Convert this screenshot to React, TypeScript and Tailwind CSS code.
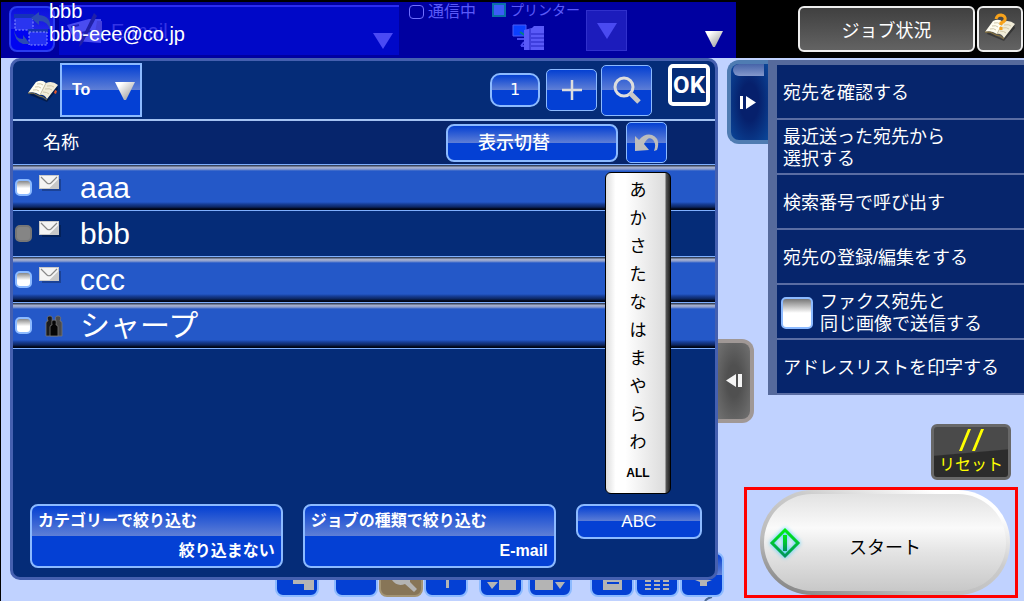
import React, { useState } from 'react';

interface Address {
  id: string;
  name: string;
  type: 'mail' | 'group';
}

const addresses: Address[] = [
  { id: 'a', name: 'aaa', type: 'mail' },
  { id: 'b', name: 'bbb', type: 'mail' },
  { id: 'c', name: 'ccc', type: 'mail' },
  { id: 'sharp', name: 'シャープ', type: 'group' },
];

const kanaIndex = ['あ', 'か', 'さ', 'た', 'な', 'は', 'ま', 'や', 'ら', 'わ'];

const gloss = 'bg-[linear-gradient(to_bottom,#0440d2_0%,#5f7fd6_50%,#0440d4_50%,#0440d4_100%)] border-[#8cbaff] text-white';
const menuItem = 'flex h-[55px] w-full items-center border-b-2 border-[#5a6da3] px-1.5 pt-[3px] text-left text-lg leading-[22px] text-white';

function DownArrow({ className = '' }: { className?: string }) {
  return (
    <svg className={className} width="20" height="20" viewBox="0 0 20 20">
      <defs>
        <linearGradient id="arrowFill" x1="0" y1="0" x2="1" y2="1">
          <stop offset="0.2" stopColor="#fff" />
          <stop offset="0.8" stopColor="#aaa" />
        </linearGradient>
      </defs>
      <path d="M0 1H20L11 19H9Z" fill="url(#arrowFill)" />
    </svg>
  );
}

function BookIcon({ question = false }: { question?: boolean }) {
  return (
    <svg width="32" height="32" viewBox="0 0 32 32" className="shrink-0">
      <path d="M4 19L19 26L30 12L31 15L20 28L3 21Z" fill="#000" opacity="0.35" />
      <path d="M1 19L9 8Q15 5 19 9L13 21Q7 17 1 19Z" fill="#fffdf0" />
      <path d="M19 9Q25 6 31 11L20 25Q17 20 13 21Z" fill="#f1ecd8" />
      <path d="M1 19Q7 18 12 22Q16 22 20 26" fill="none" stroke="#8d7436" />
      <path d="M19 9L13 21M10 10q4-1 6 1M8 13q4-1 6 1M6 16q4-1 6 1M20 12q5-1 7 1M18 15q5-1 7 1M16 18q4 0 6 2" fill="none" stroke="#cfc7aa" />
      {question
        ? <path d="M12 6Q13 2 17 2Q22 3 21 7Q20 9 17 10V12M17 14V17" fill="none" stroke="#f7a21b" strokeWidth="3" />
        : <path d="M28 16l2 1-1 3-2-1Z" fill="#e2542c" />}
    </svg>
  );
}

function MailIcon() {
  return (
    <svg width="24" height="20" viewBox="0 0 24 20">
      <rect x="3" y="4" width="19" height="12" fill="#000" opacity="0.25" />
      <rect x="0.5" y="0.5" width="19" height="13" fill="#f4f4f4" stroke="#c9c9c9" />
      <path d="M10 13.5L19.5 4V13.5Z" fill="#c8c8c8" />
      <path d="M2 2L8 8Q10 9.500 12 8L18 2" fill="none" stroke="#888" strokeWidth="1.2" />
    </svg>
  );
}

function GroupIcon() {
  return (
    <svg width="18" height="22" viewBox="0 0 18 22">
      <g stroke="#777" strokeWidth="0.8">
        <path d="M1 21V8Q1 6 3 6Q1 1 5 1Q8 1 7 6L9 9V21Z" fill="#1b1b1b" />
        <path d="M9 21V9L11 6Q9 1 13 1Q17 1 15 6Q17 6 17 8V21Z" fill="#4a4a4a" />
        <path d="M5 21V12Q5 10 7 10Q6 5 9 5Q12 5 11 10Q13 10 13 12V21Z" fill="#050505" />
      </g>
    </svg>
  );
}

function Header() {
  return (
    <header className="flex h-[58px] bg-black pt-0.5">
      <div className="relative flex min-w-0 flex-1 bg-[#0000a0] pl-2">
        <button aria-label="切替" className="mt-1 flex h-[46px] w-[46px] shrink-0 items-center justify-center rounded-lg border-2 border-[#2a3cf0] bg-[linear-gradient(to_bottom,#0a10dc_0%,#2024e8_50%,#0004f0_50%)]">
          <svg width="40" height="38" viewBox="0 0 40 38">
            <path d="M3 5H21V20H3Z" fill="#2a35f0" stroke="#8f95ff" strokeDasharray="2 1.500" />
            <path d="M2 4H22V8H2ZM16 19H36V23H16Z" fill="#1532b8" />
            <path d="M17 22H35V35H17Z" fill="#2330f5" stroke="#8f95ff" strokeDasharray="2 1.500" />
            <path d="M38 20Q36 11 27 11V15L19 8L27 2V5Q40 6 38 20Z" fill="#2b4bb4" />
            <path d="M2 19Q3 29 11 29V25L18 34H11Q2 31 2 19Z" fill="#2b4bb4" />
          </svg>
        </button>
        <div className="mt-[3px] ml-1 flex h-[50px] min-w-0 flex-1 items-center border-t-2 border-[#2a2cf0] bg-[#0008c8] pr-1.5 pl-2">
          <svg width="40" height="36" viewBox="0 0 40 36">
            <path d="M0 12L22 6H34V30L8 28Z" fill="#4a4cf0" />
            <path d="M4 14l8-2M14 20l10-2M13 24l8-2" stroke="#2223c0" strokeWidth="2" />
            <path d="M27 0L30 3L15 31L12 34L13 29Z" fill="#2020a8" />
            <path d="M30 8h5v12h-7Z" fill="#4340dc" />
          </svg>
          <span className="ml-1 text-xl text-[#3434e4]">E-mail</span>
          <svg className="mt-5 ml-auto" width="20" height="16" viewBox="0 0 20 16"><path d="M0 0H20L10 16Z" fill="#4a4af4" /></svg>
        </div>
        <div className="absolute top-0 left-12 text-xl leading-[23px] text-white">
          <p className="-mt-0.5">bbb</p>
          <p>bbb-eee@co.jp</p>
        </div>
        <div className="ml-2.5 flex shrink-0 gap-4 text-[#5a5af8]">
          <p className="flex h-5 items-center gap-1 text-base">
            <span className="h-3.5 w-[15px] rounded-sm border border-[#7070ff]" />通信中
          </p>
          <div className="flex flex-col gap-1.5">
            <p className="flex h-4 items-center gap-1 text-sm">
              <span className="h-3.5 w-3.5 border-2 border-[#0a6fa8] bg-[#3d5cf8]" />プリンター
            </p>
            <svg className="ml-5" width="33" height="28" viewBox="0 0 33 28">
              <path d="M1 1H14V12H1Z" fill="#0a40ff" stroke="#4a5cf8" />
              <path d="M5 15H12M9 22H14M12 18L9 22" stroke="#4a4af0" strokeWidth="2" />
              <path d="M8 8L14 12" stroke="#087f80" strokeWidth="2" />
              <path d="M12 6L20 4L22 2H32V26H12Z" fill="#5a5af8" />
              <path d="M19 10H32M19 14H32M19 18H32M19 22H32M18 5V26" stroke="#2525c4" />
            </svg>
          </div>
        </div>
        <button aria-label="プリンター選択" className="mt-2 ml-1.5 flex h-[41px] w-[41px] shrink-0 items-center justify-center border border-[#3030cc] bg-[#1c1cbc]">
          <svg width="20" height="16" viewBox="0 0 20 16"><path d="M0 0H20L10 16Z" fill="#4a4af0" /></svg>
        </button>
        <button aria-label="詳細" className="mt-[27px] mr-3 ml-[77px] h-5 shrink-0"><DownArrow className="h-[18px]" /></button>
      </div>
      <div className="flex w-72 shrink-0 justify-end gap-0.5 pt-1 pr-px">
        <button className="h-[46px] w-[177px] rounded-md border-2 border-[#eee] bg-gradient-to-b from-[#404040] to-[#636363] pt-1 text-lg text-white">ジョブ状況</button>
        <button aria-label="ヘルプ" className="flex h-[46px] w-[46px] items-center justify-center rounded-md border-2 border-[#eee] bg-gradient-to-b from-[#404040] to-[#636363]"><BookIcon question /></button>
      </div>
    </header>
  );
}

function DialogTools() {
  return (
    <div className="flex h-[60px] items-center border-b-2 border-[#a3c2f2] pr-[5px] pl-3.5">
      <BookIcon />
      <div className="relative ml-px">
        <select aria-label="宛先種別" className={`h-[54px] w-[82px] appearance-none border-2 pl-2.5 text-base font-bold outline-none ${gloss}`}>
          <option>To</option>
        </select>
        <DownArrow className="pointer-events-none absolute top-[18px] right-[7px]" />
      </div>
      <button className={`ml-auto h-[34px] w-[50px] rounded-[10px] border-2 font-['DejaVu_Sans'] text-base ${gloss}`}>1</button>
      <button aria-label="追加" className={`ml-1.5 flex h-[42px] w-[51px] items-center justify-center rounded-[5px] border ${gloss}`}>
        <svg width="20" height="20" viewBox="0 0 20 20"><path d="M10 0V20M0 10H20" stroke="#ddd" strokeWidth="2.500" /></svg>
      </button>
      <button aria-label="検索" className={`ml-1 flex h-[51px] w-[51px] items-center justify-center rounded-[5px] border ${gloss}`}>
        <svg width="28" height="28" viewBox="0 0 28 28">
          <circle cx="11" cy="11" r="9" fill="none" stroke="#ddd" strokeWidth="3" />
          <path d="M17 17L26 26" stroke="#c8c8c8" strokeWidth="5" />
        </svg>
      </button>
      <button className="mt-[3px] ml-4 flex h-[42px] w-[42px] items-center justify-center self-start rounded-[5px] border-4 border-white font-['Liberation_Sans_Narrow','Roboto',sans-serif] text-2xl leading-none font-bold text-white">OK</button>
    </div>
  );
}

function AddressList() {
  const [selected, setSelected] = useState<string[]>(['b']);

  const toggle = (id: string) => {
    setSelected(selected.includes(id) ? selected.filter(i => i !== id) : [...selected, id]);
  };

  return (
    <ul>
      {addresses.map(item => (
        <li
          key={item.id}
          className={`h-[46px] border-b border-[#7fb0ff] ${selected.includes(item.id)
            ? 'bg-[#052c78]'
            : 'bg-[linear-gradient(to_bottom,#39445c_0,#39445c_1px,#a9b3cd_2px,#8fa0cf_4px,#2458c8_6px,#2458c8_37px,#173f99_39px,#0c2560_42px,#000514_44px)]'}`}
        >
          <label className="flex h-full items-center pl-0.5">
            <input
              type="checkbox"
              checked={selected.includes(item.id)}
              onChange={() => toggle(item.id)}
              className="h-[17px] w-[17px] shrink-0 appearance-none rounded-[5px] border-2 border-[#8cbaff] bg-[linear-gradient(to_bottom,#888_0%,#fff_55%)] checked:border-[#777] checked:bg-[#858585] checked:bg-none"
            />
            <span className="flex w-12 justify-center pr-3.5">
              {item.type === 'mail' ? <span className="mb-1.5 ml-1"><MailIcon /></span> : <span className="ml-2.5"><GroupIcon /></span>}
            </span>
            <span className="text-3xl leading-[44px] text-white">{item.name}</span>
          </label>
        </li>
      ))}
    </ul>
  );
}

function KanaIndex() {
  return (
    <nav className="absolute top-[111px] right-11 flex w-[66px] flex-col items-center rounded-md border border-black bg-[linear-gradient(to_right,#ddd_0%,#fff_15%,#fff_30%,#dcdcdc_92%,#555_94%,#222_100%)] pt-1 pb-1.5 text-black">
      {kanaIndex.map(k => <button key={k} className="h-7 w-full text-[17px] leading-7">{k}</button>)}
      <button className="h-[30px] w-full pt-0.5 text-xs font-bold">ALL</button>
    </nav>
  );
}

function AddressBook() {
  return (
    <section className="relative z-10 flex flex-1 flex-col rounded-[10px] border-[3px] border-[#4560b0] bg-[#052c78]">
      <DialogTools />
      <div className="flex h-11 items-center border-b border-[#7fb0ff] bg-[#06256c] pr-12 pl-[30px]">
        <h2 className="text-lg text-white">名称</h2>
        <button className={`ml-auto h-[38px] w-[172px] rounded-lg border-2 pl-[30px] text-left text-lg font-medium ${gloss}`}>表示切替</button>
        <button aria-label="戻る" className={`ml-2 flex h-[41px] w-[41px] items-center justify-center rounded-[5px] border ${gloss}`}>
          <svg width="24" height="20" viewBox="0 0 24 20">
            <path d="M0 3L4 7Q10 0 17 2Q26 6 22 17L19 18Q22 10 17 6Q13 3 9 11L14 17L0 18Z" fill="#bdbdbd" />
          </svg>
        </button>
      </div>
      <AddressList />
      <KanaIndex />
      <div className="mt-auto grid grid-cols-[2fr_2fr_1fr] items-start gap-5 pr-[13px] pb-[9px] pl-[17px] text-base font-bold">
        <button className={`flex h-16 flex-col justify-between rounded-lg border-2 px-1.5 py-[3px] ${gloss}`}>
          <span className="self-start">カテゴリーで絞り込む</span>
          <span className="self-end">絞り込まない</span>
        </button>
        <button className={`flex h-16 flex-col justify-between rounded-lg border-2 px-1.5 py-[3px] ${gloss}`}>
          <span className="self-start">ジョブの種類で絞り込む</span>
          <span className="self-end">E-mail</span>
        </button>
        <button className={`h-[35px] rounded-lg border-2 text-[17px] leading-6 font-normal ${gloss}`}>ABC</button>
      </div>
    </section>
  );
}

const toolButtons = [
  { label: '送信', className: 'mr-3.5', icon: 'M16 0H37V10H27V4H16Z' },
  { label: '表示', className: '', icon: '' },
  { label: '拡大', className: '', icon: 'M11 0Q16 7 24 4L33 12L36 9L29 2V0Z', brown: true },
  { label: '追加', className: 'mr-2.5', icon: 'M20 0H23V8H20Z' },
  { label: '前へ', className: 'mr-1', icon: 'M6 2H17L11 9ZM18 0H35V10H18Z' },
  { label: '次へ', className: 'mr-[17px]', icon: 'M5 0H23V10H5ZM25 2H35L30 9Z' },
  { label: '文書', className: '', icon: 'M11 0H30V2H15V4H27V2H30V10H11Z' },
  { label: '一覧', className: '', icon: 'M8 0H14V2H8ZM8 4H14V6H8ZM8 8H14V10H8ZM17 0H23V2H17ZM17 4H23V6H17ZM17 8H23V10H17ZM26 0H32V2H26ZM26 4H32V6H26ZM26 8H32V10H26Z' },
  { label: '移動', className: '', icon: 'M13 0H30L25 2V6H18V2Z' },
];

function BottomTools() {
  return (
    <div className="-mt-7 -mr-1.5 flex justify-end gap-px">
      {toolButtons.map(b => (
        <button
          key={b.label}
          aria-label={b.label}
          className={`flex h-[45px] w-11 items-end justify-center rounded-lg border-2 pb-px ${b.className} ${b.brown ? 'border-[#a39474] bg-[#877557]' : gloss}`}
        >
          <svg width="40" height="14" viewBox="0 0 40 14" className="shrink-0"><path d={b.icon} fill="#b4b4b4" /></svg>
        </button>
      ))}
    </div>
  );
}

function SideMenu() {
  return (
    <div className="min-w-0 flex-1 self-start border-t-[5px] border-l-[9px] border-[#566a9c] bg-[#06256c]">
      <button className={menuItem}>宛先を確認する</button>
      <button className={menuItem}>最近送った宛先から<br />選択する</button>
      <button className={menuItem}>検索番号で呼び出す</button>
      <button className={menuItem}>宛先の登録/編集をする</button>
      <label className={menuItem}>
        <input type="checkbox" className="mr-[7px] -ml-0.5 h-8 w-8 shrink-0 appearance-none rounded-[5px] border-2 border-[#8cbaff] bg-[linear-gradient(to_bottom,#777_0%,#fff_50%)]" />
        <span>ファクス宛先と<br />同じ画像で送信する</span>
      </label>
      <button className={menuItem}>アドレスリストを印字する</button>
    </div>
  );
}

export default function App() {
  return (
    <div className="flex min-h-screen flex-col overflow-hidden border-l border-black bg-[#c0d2ff] font-['Liberation_Sans','Noto_Sans_CJK_JP',sans-serif]">
      <Header />
      <main className="flex flex-1">
        <div className="ml-[9px] flex min-w-0 flex-1 flex-col">
          <AddressBook />
          <BottomTools />
          <svg className="ml-auto" width="14" height="4" viewBox="0 0 14 4"><path d="M1 4Q3 1 8 0" fill="none" stroke="#4c6a94" strokeWidth="2" /></svg>
        </div>
        <aside className="flex w-[306px] shrink-0 flex-col">
          <div className="flex pt-0.5">
            <div className="flex w-[50px] flex-col">
              <button aria-label="メニューを閉じる" className="flex h-[84px] w-[41px] flex-col items-center self-end rounded-l-xl border-4 border-r-0 border-[#4f7cb2] bg-[radial-gradient(ellipse_at_center,#06206c_35%,#0b479a_100%)]">
                <span className="mr-0.5 h-3 w-[31px] rounded-l-lg bg-gradient-to-b from-[#4663a8] to-[#8498cc]" />
                <svg className="mt-5 mr-1" width="16" height="14" viewBox="0 0 16 14"><path d="M0 0H3V13H0ZM6 0L16 6.500L6 13Z" fill="#fff" /></svg>
              </button>
              <button aria-label="リストを閉じる" className="mt-[195px] flex h-[84px] w-9 items-center justify-center rounded-r-xl border-4 border-l-0 border-[#a09896] bg-[radial-gradient(ellipse_at_center,#505050_30%,#727272_100%)]">
                <svg width="16" height="14" viewBox="0 0 16 14"><path d="M10 0V13L0 6.500ZM12 0H16V13H12Z" fill="#f4f4f4" /></svg>
              </button>
            </div>
            <SideMenu />
          </div>
          <button className="mt-px mr-[13px] flex h-14 w-20 flex-col items-center justify-between self-end rounded-md border-[3px] border-[#686868] bg-[linear-gradient(175deg,#4a4a4a_50%,#2c2c2c_52%)] pt-0.5 text-base leading-6 text-[#ffff00]">
            <svg width="26" height="22" viewBox="0 0 26 22"><path d="M1 22L10 0H13L4 22ZM14 22L23 0H26L17 22Z" fill="#ff0" /></svg>
            リセット
          </button>
          <div className="mt-[7px] mr-1.5 ml-[26px] flex h-[111px] justify-end border-[3px] border-[#f00] pr-[5px]">
            <button className="flex h-[105px] w-[250px] items-center rounded-[52px] bg-[linear-gradient(20deg,#777_0%,#bbb_30%,#ccc_60%,#fff_85%)] p-1 text-lg text-black">
              <span className="flex h-full w-full items-center rounded-[48px] bg-[linear-gradient(to_bottom,#e2e2e2_0%,#fafafa_35%,#e4e4e4_60%,#c8c8c8_100%)] pl-[5px]">
                <svg width="32" height="32" viewBox="0 0 32 32" className="shrink-0 drop-shadow-[0_0_2px_#3cf]">
                  <defs>
                    <linearGradient id="startGreen" x1="0" y1="0" x2="0" y2="1">
                      <stop offset="0" stopColor="#0e1" />
                      <stop offset="1" stopColor="#00945c" />
                    </linearGradient>
                  </defs>
                  <path d="M16 3L29 16L16 29L3 16Z" fill="none" stroke="url(#startGreen)" strokeWidth="3" />
                  <path d="M14 8H18V24H14Z" fill="url(#startGreen)" />
                </svg>
                <span className="mt-2.5 ml-12">スタート</span>
              </span>
            </button>
          </div>
        </aside>
      </main>
    </div>
  );
}
